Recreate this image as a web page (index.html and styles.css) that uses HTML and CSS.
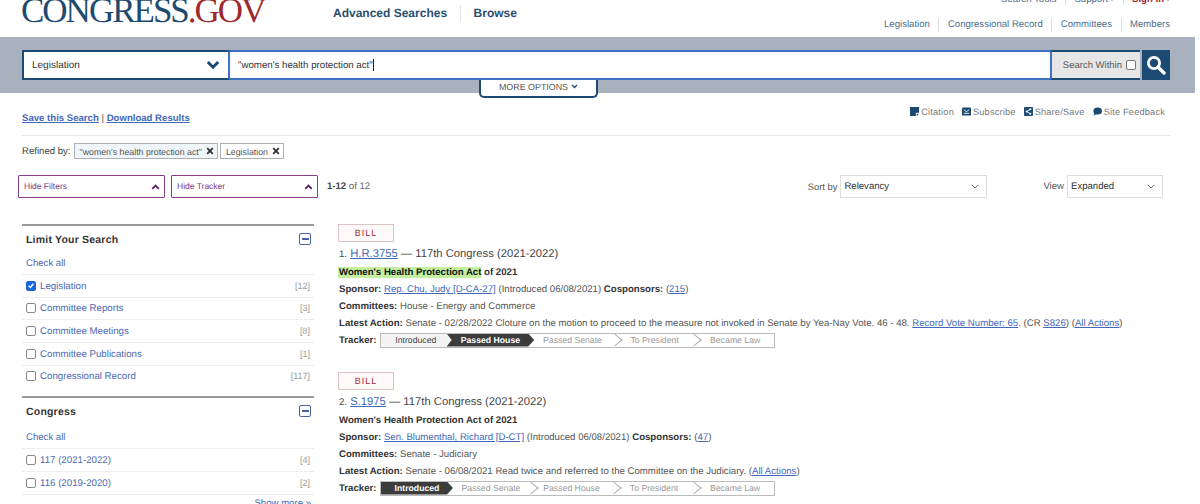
FILE: index.html
```html
<!DOCTYPE html>
<html lang="en">
<head>
<meta charset="utf-8">
<title>Congress.gov</title>
<link rel="stylesheet" href="styles.css">
</head>
<body>
<div class="page">
  <header class="masthead">
    <div class="logo"><span class="logo-blue">CONGRESS</span><span class="logo-red">.GOV</span></div>
    <nav class="mainnav"><a class="mainnav-link sep">Advanced Searches</a><a class="mainnav-link">Browse</a></nav>
    <div class="topright">
      <div class="toolnav"><span class="tool sep2">Search Tools</span><span class="tool sep2">Support <i class="tri"></i></span><span class="tool signin">Sign In <i class="tri"></i></span></div>
      <div class="sitenav"><a class="site sep2">Legislation</a><a class="site sep2">Congressional Record</a><a class="site sep2">Committees</a><a class="site">Members</a></div>
    </div>
  </header>

  <section class="band">
    <div class="searchbar">
      <div class="scope"><span>Legislation</span>
        <svg class="scope-chev" viewBox="0 0 14 10" width="14" height="10"><path d="M1.8 2 7 7.2 12.2 2" fill="none" stroke="#1c4a72" stroke-width="3"/></svg>
      </div>
      <div class="query"><span>"women's health protection act"</span><i class="caret"></i></div>
      <div class="within">Search Within <i class="within-box"></i></div>
      <div class="go">
        <svg viewBox="0 0 20 20" width="20" height="20"><circle cx="8" cy="8" r="5.6" fill="none" stroke="#fff" stroke-width="2.8"/><path d="M12.2 12.2 18 18" stroke="#fff" stroke-width="3.4" stroke-linecap="round"/></svg>
      </div>
    </div>
    <div class="more">MORE OPTIONS <svg viewBox="0 0 8 6" width="7" height="5"><path d="M1 1.2 4 4.2 7 1.2" fill="none" stroke="#1c4a72" stroke-width="1.6"/></svg></div>
  </section>

  <div class="util">
    <div class="save"><a class="save-link">Save this Search</a> | <a class="save-link">Download Results</a></div>
    <div class="actions">
      <span class="action"><svg viewBox="0 0 10 10" width="9" height="9"><path d="M0 0H10V6.5H6.5V10H0Z M7.5 7.5H10L7.5 10Z" fill="#1c4a72"/></svg>Citation</span>
      <span class="action"><svg viewBox="0 0 10 10" width="9" height="9"><rect width="10" height="9" y=".5" rx="1" fill="#1c4a72"/><path d="M2 3 5 5.2 8 3M2 7H8" fill="none" stroke="#fff" stroke-width="1"/></svg>Subscribe</span>
      <span class="action"><svg viewBox="0 0 10 10" width="9" height="9"><rect width="10" height="10" rx="1" fill="#1c4a72"/><path d="M7 2.5 3 5 7 7.5" fill="none" stroke="#fff" stroke-width="1"/><circle cx="7" cy="2.5" r="1.2" fill="#fff"/><circle cx="3" cy="5" r="1.2" fill="#fff"/><circle cx="7" cy="7.5" r="1.2" fill="#fff"/></svg>Share/Save</span>
      <span class="action"><svg viewBox="0 0 10 10" width="9" height="9"><ellipse cx="5.2" cy="4.4" rx="4.8" ry="3.9" fill="#1c4a72"/><path d="M1.5 6 .6 9.4 4.2 7.8Z" fill="#1c4a72"/></svg>Site Feedback</span>
    </div>
  </div>

  <div class="refined">
    <span class="refined-label">Refined by:</span>
    <span class="tag tag-query"><span class="tag-text">"women's health protection act"</span><svg class="tag-x" viewBox="0 0 8 8" width="8" height="8"><path d="M1.2 1.2 6.8 6.8M6.8 1.2 1.2 6.8" stroke="#333" stroke-width="1.9"/></svg></span>
    <span class="tag"><span class="tag-text">Legislation</span><svg class="tag-x" viewBox="0 0 8 8" width="8" height="8"><path d="M1.2 1.2 6.8 6.8M6.8 1.2 1.2 6.8" stroke="#333" stroke-width="1.9"/></svg></span>
  </div>

  <div class="controls">
    <button class="toggle"><span class="toggle-text">Hide Filters</span><svg viewBox="0 0 10 7" width="9" height="6"><path d="M1.2 5.6 5 1.8 8.8 5.6" fill="none" stroke="#5f1f63" stroke-width="2.2"/></svg></button>
    <button class="toggle"><span class="toggle-text">Hide Tracker</span><svg viewBox="0 0 10 7" width="9" height="6"><path d="M1.2 5.6 5 1.8 8.8 5.6" fill="none" stroke="#5f1f63" stroke-width="2.2"/></svg></button>
    <span class="count"><b>1-12</b> of 12</span>
    <span class="sort-label">Sort by</span>
    <div class="pick pick-sort">Relevancy<svg viewBox="0 0 10 6" width="8" height="5"><path d="M1 1 5 5 9 1" fill="none" stroke="#555" stroke-width="1.1"/></svg></div>
    <span class="view-label">View</span>
    <div class="pick pick-view">Expanded<svg viewBox="0 0 10 6" width="8" height="5"><path d="M1 1 5 5 9 1" fill="none" stroke="#555" stroke-width="1.1"/></svg></div>
  </div>

  <main class="main">
    <aside class="filters">
      <section class="facet">
        <div class="facet-head"><h3 class="facet-title">Limit Your Search</h3><i class="minus"></i></div>
        <a class="checkall">Check all</a>
        <ul class="facet-list">
          <li class="facet-row"><i class="box box-on"><svg viewBox="0 0 10 10" width="9" height="9"><path d="M2 5.2 4.2 7.4 8 2.8" fill="none" stroke="#fff" stroke-width="1.8"/></svg></i><a class="facet-link">Legislation</a><span class="num">[12]</span></li>
          <li class="facet-row"><i class="box"></i><a class="facet-link">Committee Reports</a><span class="num">[3]</span></li>
          <li class="facet-row"><i class="box"></i><a class="facet-link">Committee Meetings</a><span class="num">[8]</span></li>
          <li class="facet-row"><i class="box"></i><a class="facet-link">Committee Publications</a><span class="num">[1]</span></li>
          <li class="facet-row"><i class="box"></i><a class="facet-link">Congressional Record</a><span class="num">[117]</span></li>
        </ul>
      </section>
      <section class="facet">
        <div class="facet-head"><h3 class="facet-title">Congress</h3><i class="minus"></i></div>
        <a class="checkall checkall-low">Check all</a>
        <ul class="facet-list">
          <li class="facet-row"><i class="box"></i><a class="facet-link">117 (2021-2022)</a><span class="num">[4]</span></li>
          <li class="facet-row"><i class="box"></i><a class="facet-link">116 (2019-2020)</a><span class="num">[2]</span></li>
        </ul>
        <div class="showmore">Show more »</div>
      </section>
    </aside>

    <div class="results">
      <article class="result">
        <div class="badge">BILL</div>
        <div class="heading"><span class="idx">1.</span> <a class="link">H.R.3755</a> — 117th Congress (2021-2022)</div>
        <div class="line title"><mark class="hit">Women's Health Protection Act</mark> of 2021</div>
        <div class="line"><b>Sponsor:</b> <a class="link">Rep. Chu, Judy [D-CA-27]</a> (Introduced 06/08/2021) <b>Cosponsors:</b> (<a class="link">215</a>)</div>
        <div class="line"><b>Committees:</b> House - Energy and Commerce</div>
        <div class="line"><b>Latest Action:</b> Senate - 02/28/2022 Cloture on the motion to proceed to the measure not invoked in Senate by Yea-Nay Vote. 46 - 48. <a class="link">Record Vote Number: 65</a>. (CR <a class="link">S826</a>) (<a class="link">All Actions</a>)</div>
        <div class="line trackrow"><b class="track-label">Tracker:</b>
          <div class="tracker">
            <span class="step step-1 step-past">Introduced</span>
            <span class="step step-2 step-now">Passed House</span>
            <span class="step step-3">Passed Senate</span>
            <span class="step step-4">To President</span>
            <span class="step step-5">Became Law</span>
          </div>
        </div>
      </article>
      <article class="result">
        <div class="badge">BILL</div>
        <div class="heading"><span class="idx">2.</span> <a class="link">S.1975</a> — 117th Congress (2021-2022)</div>
        <div class="line title">Women's Health Protection Act of 2021</div>
        <div class="line"><b>Sponsor:</b> <a class="link">Sen. Blumenthal, Richard [D-CT]</a> (Introduced 06/08/2021) <b>Cosponsors:</b> (<a class="link">47</a>)</div>
        <div class="line"><b>Committees:</b> Senate - Judiciary</div>
        <div class="line"><b>Latest Action:</b> Senate - 06/08/2021 Read twice and referred to the Committee on the Judiciary. (<a class="link">All Actions</a>)</div>
        <div class="line trackrow"><b class="track-label">Tracker:</b>
          <div class="tracker">
            <span class="step step-1 step-first-now">Introduced</span>
            <span class="step step-2">Passed Senate</span>
            <span class="step step-3">Passed House</span>
            <span class="step step-4">To President</span>
            <span class="step step-5">Became Law</span>
          </div>
        </div>
      </article>
    </div>
  </main>
</div>
</body>
</html>
```

FILE: styles.css
```css
* { box-sizing: border-box; }
html, body { margin: 0; height: 504px; overflow: hidden; background: #fff; }
body { font-family: "Liberation Sans", Arial, sans-serif; font-size: 9.65px; color: #444; text-rendering: geometricPrecision; }
a { cursor: pointer; }
.page { width: 1195px; height: 504px; overflow: hidden; }

/* masthead */
.masthead { height: 37px; display: flex; align-items: flex-start; padding-left: 21px; position: relative; }
.logo { font-family: "Liberation Serif", serif; font-size: 35px; line-height: 35px; margin-top: -7px; letter-spacing: -2px; white-space: nowrap; width: 312px; }
.logo-blue { color: #1d4a6e; }
.logo-red { color: #9c2a2e; }
.mainnav { display: flex; margin-top: 5px; }
.mainnav-link { color: #2b4f70; font-weight: bold; font-size: 12px; line-height: 16px; }
.mainnav-link.sep { padding-right: 13px; margin-right: 12.5px; border-right: 1px solid #e2e2e2; }
.topright { margin-left: auto; padding-right: 25px; display: flex; flex-direction: column; align-items: flex-end; margin-top: -6px; }
.toolnav { display: flex; height: 11px; line-height: 11px; font-size: 9.6px; color: #4d6a85; }
.tool { padding: 0 8.5px; display: flex; align-items: center; gap: 2px; }
.tool:last-child { padding-right: 0; }
.tri { width: 0; height: 0; border: 2.5px solid transparent; border-top: 3px solid currentColor; border-bottom: 0; }
.signin { color: #a51c24; font-weight: bold; }
.sep2 { border-right: 1px solid #ddd; }
.sitenav { display: flex; margin-top: 13px; font-size: 9.6px; line-height: 14px; }
.site { color: #4d6f8c; padding: 0 8.5px; }
.site:last-child { padding-right: 0; }

/* search band */
.band { height: 56px; background: #a9b1bf; padding: 13px 25px 0 22px; position: relative; }
.searchbar { display: flex; height: 30px; background: #1c4a72; }
.scope { width: 204px; margin: 2px 0 2px 2px; padding: 0 8px; background: #fff; display: flex; align-items: center; justify-content: space-between; font-size: 10px; color: #333; }
.query { width: 824px; background: #fff; border: 2px solid #3f72c4; border-radius: 3px; display: flex; align-items: center; padding-left: 8px; font-size: 9.7px; color: #333; }
.caret { width: 1px; height: 12px; background: #222; }
.within { width: 88px; margin: 2px 0; padding-right: 4px; background: #e6e6e6; display: flex; align-items: center; justify-content: flex-end; gap: 4px; font-size: 9.5px; color: #555; }
.within-box { width: 10px; height: 10px; border: 1px solid #777; border-radius: 2px; background: #fff; }
.go { width: 30px; display: flex; align-items: center; justify-content: center; border-left: 2px solid #a9b1bf; }
.more { position: absolute; left: 479px; top: 43px; width: 119px; height: 18px; padding-bottom: 3px; background: #fff; border: 2px solid #1c4a72; border-top: 0; border-radius: 0 0 5px 5px; display: flex; align-items: center; justify-content: center; gap: 3px; font-size: 8.9px; color: #555; }

/* utility row */
.util { height: 43px; margin: 0 25px 0 22px; border-bottom: 1px solid #e6e6e6; display: flex; justify-content: space-between; align-items: flex-start; }
.save { margin-top: 19px; line-height: 14px; font-size: 9.6px; color: #555; }
.save-link { color: #4468b8; font-weight: bold; text-decoration: underline; }
.actions { display: flex; gap: 8px; margin-top: 12px; padding-right: 5px; line-height: 14px; font-size: 9.2px; color: #777; letter-spacing: .2px; }
.action { display: flex; align-items: center; gap: 2px; }
.action svg { margin-top: -1px; }

/* refined */
.refined { display: flex; align-items: center; height: 16px; margin: 7px 0 0 22px; gap: 2px; }
.refined-label { font-size: 9.6px; color: #444; margin-right: 1px; padding-top: 1px; }
.tag { height: 16px; display: flex; align-items: center; padding: 0 3px 0 5px; border: 1px solid #aab2b8; font-size: 8.8px; color: #555; gap: 4px; }
.tag-text { padding-top: 1px; }
.tag-query { background: #eff5f8; }
.tag-x { flex: none; }

/* controls */
.controls { display: flex; align-items: center; height: 23px; margin-top: 16px; padding-left: 18px; }
.toggle { width: 147px; height: 23px; margin: 0 6px 0 0; padding: 0 4px 0 5px; background: #fff; border: 1px solid #8a3d8d; border-radius: 1px; color: #7b3b80; font: 8.5px "Liberation Sans", Arial, sans-serif; text-rendering: geometricPrecision; display: flex; align-items: center; justify-content: space-between; }
.toggle-text { margin-top: -1px; }
.count { margin-left: 3px; font-size: 9.6px; color: #666; }
.count b { color: #444; }
.sort-label { margin-left: auto; margin-right: 3px; font-size: 9.4px; color: #555; }
.pick { height: 23px; border: 1px solid #ddd; display: flex; align-items: center; justify-content: space-between; padding: 0 7px 0 3px; font-size: 9.6px; color: #333; }
.pick-sort { width: 147px; }
.pick-view { width: 96px; margin-right: 32px; }
.view-label { margin-left: 56px; margin-right: 3px; font-size: 9.6px; color: #555; }

/* main */
.main { display: flex; align-items: flex-start; margin-top: 26px; padding-left: 22px; }
.filters { width: 292px; }
.facet { border-top: 2px solid #999; margin-bottom: 8.5px; }
.facet-head { height: 26px; display: flex; align-items: center; justify-content: space-between; padding: 0 3px 0 4px; }
.facet-title { margin: 0; padding-top: 2px; font-size: 10.5px; font-weight: bold; color: #333; letter-spacing: .2px; }
.minus { width: 12px; height: 12px; border: 1.5px solid #4a63a8; border-radius: 2px; display: flex; align-items: center; justify-content: center; }
.minus::before { content: ""; width: 7px; height: 1.5px; background: #4a63a8; }
.checkall { display: block; height: 22px; line-height: 24px; padding-left: 4px; color: #4c68b4; font-size: 9.6px; }
.checkall-low { margin-top: 2.5px; }
.facet-list { list-style: none; margin: 0; padding: 0; }
.facet-row { height: 22.67px; border-top: 1px solid #eee; display: flex; align-items: center; padding: 0 4px; }
.box { width: 10px; height: 10px; border: 1px solid #888; border-radius: 2px; margin-right: 4px; display: flex; align-items: center; justify-content: center; background: #fff; flex: none; }
.box-on { background: #1a68d8; border-color: #1a68d8; }
.facet-link { color: #4c68b4; font-size: 9.7px; padding-top: 1px; }
.num { margin-left: auto; color: #999; font-size: 9px; }
.showmore { border-top: 1px solid #eee; text-align: right; padding: 3px 3px 0 0; color: #4c68b4; font-size: 9.6px; }

/* results */
.results { margin-left: 24px; flex: 1; }
.result { margin-bottom: 24px; }
.badge { width: 56px; height: 18px; border: 1px solid #dcc4c4; background: #fdf9f9; color: #a3282e; font-size: 9px; line-height: 16px; text-align: center; letter-spacing: 1px; }
.heading { margin-top: 2px; height: 19px; line-height: 21px; font-size: 11.25px; color: #444; padding-left: 1px; }
.idx { font-size: 9.65px; }
.link { color: #4468b8; text-decoration: underline; }
.line { height: 17px; line-height: 19px; font-size: 9.65px; color: #555; white-space: nowrap; padding-left: 1px; }
.line b { color: #333; }
.title { font-weight: bold; color: #333; }
.hit { background: #c4eea0; color: #111; margin-left: -1px; padding-left: 1px; }
.trackrow { display: flex; align-items: center; line-height: 17px; }
.track-label { width: 41px; flex: none; padding-top: 2px; }
.tracker { width: 395px; height: 15px; border: 1px solid #bbb; display: flex; margin-top: 1px; }
.step { position: relative; display: flex; align-items: center; justify-content: center; color: #999; font-size: 8.7px; height: 13px; }
.step-1 { width: 70px; }
.step-2 { width: 82px; padding-right: 2px; }
.step-3 { width: 83px; padding-right: 6px; }
.step-4 { width: 80px; padding-right: 4px; }
.step-5 { width: 78px; }
.step:not(.step-5):not(.step-now):not(.step-first-now)::after { content: ""; position: absolute; right: -3px; top: 1px; width: 9px; height: 9px; border-top: 1px solid #aaa; border-right: 1px solid #aaa; transform: rotate(45deg) skew(-6deg, -6deg); }
.step-past { background: #f4f4f4; color: #444; }
.step-past::after { display: none; }
.step-now, .step-first-now { background: #3c3c3c; color: #fff; font-weight: bold; z-index: 1; clip-path: polygon(0 0, calc(100% - 6px) 0, 100% 50%, calc(100% - 6px) 100%, 0 100%); }
.step-now { margin-left: -4px; width: 88px; padding-right: 0; clip-path: polygon(0 0, calc(100% - 6px) 0, 100% 50%, calc(100% - 6px) 100%, 0 100%, 5px 50%); }
.step-first-now { width: 72px; margin-right: -2px; }
```
